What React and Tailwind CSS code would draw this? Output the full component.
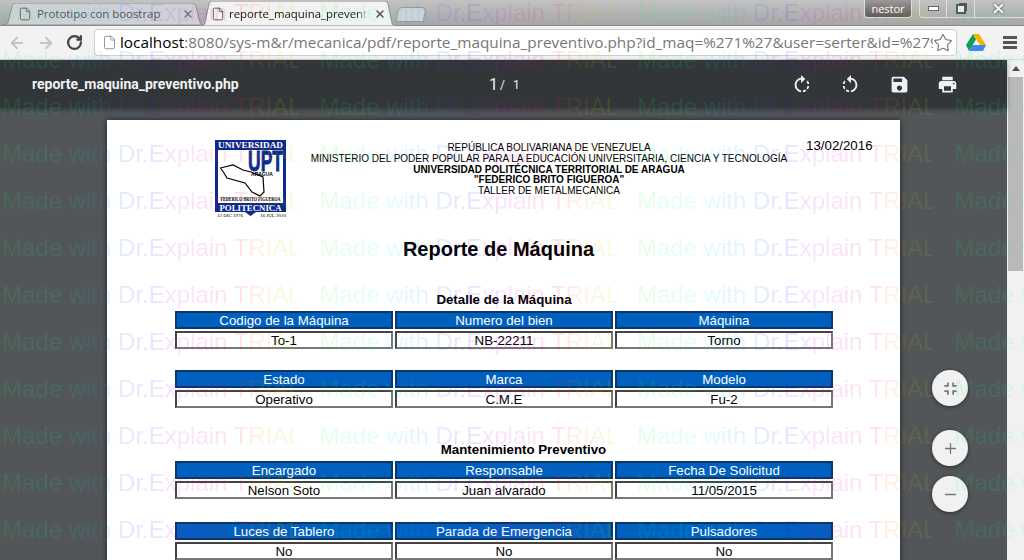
import { ArrowLeft, ArrowRight, File, Minus, Plus, RotateCw, Star, X } from "lucide-react";

function Watermark() {
  const rows = [13, 60, 107, 154, 201, 248, 295, 342, 389, 436, 483, 530];
  return (
    <div className="absolute left-[2px] top-[-11px] z-20 flex flex-col pointer-events-none">
      {rows.map((y) => (
        <div key={y} className="h-[47px] flex items-center gap-[21.5px]">
          {[0, 1, 2, 3].map((i) => (
            <span
              key={i}
              className="w-[296px] shrink-0 whitespace-nowrap text-[24px] leading-[28px] text-transparent bg-clip-text opacity-[0.11] bg-[linear-gradient(90deg,#00ff40_0%,#00ffe0_22%,#0080ff_38%,#4000ff_50%,#e000ff_60%,#ff0040_80%,#ff8000_86%,#a0ff00_100%)]"
            >
              Made with Dr.Explain TRIAL
            </span>
          ))}
        </div>
      ))}
    </div>
  );
}

function Logo() {
  return (
    <svg width="72" height="78" viewBox="0 0 72 78" className="shrink-0">
      <path d="M0 0H71V72H41L35.5 76L30 72H0Z" fill="#0b2a8c" />
      <path d="M3 10H68V63H3Z" fill="#fff" />
      <text x="35.5" y="8" textAnchor="middle" fontSize="8" fontWeight="700" fontFamily="Liberation Serif" fill="#fff" textLength="65" lengthAdjust="spacingAndGlyphs">UNIVERSIDAD</text>
      <text x="33" y="31" fontSize="29" fontWeight="700" fontFamily="Liberation Sans" fill="#0b2a8c" stroke="#0b2a8c" strokeWidth="0.8" textLength="35" lengthAdjust="spacingAndGlyphs">UPT</text>
      <path d="M5.5 28L18 25L28 30L36 32L48 37L49 52L45 56L37 52L30 43L12 38L9 33Z" fill="#fff" stroke="#000" strokeWidth="1.2" />
      <text x="47" y="36" textAnchor="middle" fontSize="5" fontWeight="700" fontFamily="Liberation Sans" fill="#000">ARAGUA</text>
      <text x="35.5" y="61" textAnchor="middle" fontSize="5.5" fontWeight="700" fontFamily="Liberation Serif" fill="#000" textLength="60" lengthAdjust="spacingAndGlyphs">FEDERICO BRITO FIGUEROA</text>
      <text x="35.5" y="71" textAnchor="middle" fontSize="8" fontWeight="700" fontFamily="Liberation Serif" fill="#fff" textLength="62" lengthAdjust="spacingAndGlyphs">POLITECNICA</text>
      <text x="2" y="77" fontSize="5" fontFamily="Liberation Serif" fill="#000">12 DIC 1976</text>
      <text x="71" y="77" textAnchor="end" fontSize="5" fontFamily="Liberation Serif" fill="#000">16 JUL 2010</text>
    </svg>
  );
}

function Block({ head, body, className }) {
  return (
    <div className={`flex flex-col gap-[2px] ${className}`}>
      <div className="flex gap-[2px]">
        {head.map((c) => (
          <div key={c} className="w-[218px] h-[18px] border-2 border-[#0d3768] bg-[#0060c0] text-white text-center text-[13.3px] leading-[15px]">
            {c}
          </div>
        ))}
      </div>
      <div className="flex gap-[2px]">
        {body.map((c, i) => (
          <div key={i} className="w-[218px] h-[18px] border-2 border-[#777] border-t-[#444] border-l-[#444] bg-white text-black text-center text-[13.3px] leading-[15px]">
            {c}
          </div>
        ))}
      </div>
    </div>
  );
}

function Round({ children, className }) {
  return (
    <div className={`absolute left-[932px] w-[36px] h-[36px] rounded-full bg-[#f1f1f1] shadow-[0_1px_4px_rgba(0,0,0,0.45)] flex items-center justify-center text-[#777] ${className}`}>
      {children}
    </div>
  );
}

function MaterialIcon({ d, size }) {
  return (
    <svg width={size} height={size} viewBox="0 0 24 24" fill="currentColor" className="shrink-0">
      <path d={d} />
    </svg>
  );
}

function Tab({ fill, stroke, className, children }) {
  return (
    <div className={`relative flex items-center ${className}`}>
      <svg className="absolute inset-0 w-full h-full" viewBox="0 0 100 24" preserveAspectRatio="none">
        <path d="M0 24C3 24 3 22 3.2 19L5 3C5.2 1 6 0 7 0H93C94 0 94.8 1 95 3L96.8 19C97 22 97 24 100 24Z" fill={fill} stroke={stroke} strokeWidth="1" vectorEffect="non-scaling-stroke" />
      </svg>
      {children}
    </div>
  );
}

const ROTATE_R = "M15.55 5.55L11 1v3.07C7.06 4.56 4 7.92 4 12s3.05 7.44 7 7.93v-2.02c-2.84-.48-5-2.94-5-5.91s2.16-5.43 5-5.91V10l4.55-4.45zM19.93 11c-.17-1.39-.72-2.73-1.62-3.89l-1.42 1.42c.54.75.88 1.6 1.02 2.47h2.02zM13 17.9v2.02c1.39-.17 2.74-.71 3.9-1.61l-1.44-1.44c-.75.54-1.59.89-2.46 1.03zm3.89-2.42l1.42 1.41c.9-1.16 1.45-2.5 1.62-3.89h-2.02c-.14.87-.48 1.72-1.02 2.48z";
const ROTATE_L = "M7.11 8.53L5.7 7.11C4.8 8.27 4.24 9.61 4.07 11h2.02c.14-.87.49-1.72 1.02-2.47zM6.09 13H4.07c.17 1.39.72 2.73 1.62 3.89l1.41-1.42c-.52-.75-.87-1.59-1.01-2.47zm1.01 5.32c1.16.9 2.51 1.44 3.9 1.61V17.9c-.87-.15-1.71-.49-2.46-1.03L7.1 18.32zM13 4.07V1L8.45 5.55 13 10V6.09c2.84.48 5 2.94 5 5.91s-2.16 5.43-5 5.91v2.02c3.95-.49 7-3.85 7-7.93s-3.05-7.44-7-7.93z";
const SAVE = "M17 3H5c-1.11 0-2 .9-2 2v14c0 1.1.89 2 2 2h14c1.1 0 2-.9 2-2V7l-4-4zm-5 16c-1.66 0-3-1.34-3-3s1.34-3 3-3 3 1.34 3 3-1.34 3-3 3zm3-10H5V5h10v4z";
const PRINT = "M19 8H5c-1.66 0-3 1.34-3 3v6h4v4h12v-4h4v-6c0-1.66-1.34-3-3-3zm-3 11H8v-5h8v5zm3-7c-.55 0-1-.45-1-1s.45-1 1-1 1 .45 1 1-.45 1-1 1zm-1-9H6v4h12V3z";
const FIT = "M5 16h3v3h2v-5H5v2zm3-8H5v2h5V5H8v3zm6 11h2v-3h3v-2h-5v5zm2-11V5h-2v5h5V8h-3z";

export default function App() {
  return (
    <div className="relative w-[1024px] h-[560px] overflow-hidden flex flex-col font-['Liberation_Sans',sans-serif]">
      <Watermark />

      {/* tab strip */}
      <div className="relative h-[26px] shrink-0 flex items-end pl-[2px] bg-[linear-gradient(180deg,#c2c2c2,#a6a6a6)] border-b border-[#8a8a8a]">
        <Tab fill="#ced2d6" stroke="#8c8c8c" className="w-[204px] h-[22px]">
          <File size={14} strokeWidth={1.4} className="relative ml-[16px] text-[#555]" />
          <span className="relative ml-[5px] w-[140px] whitespace-nowrap text-[11.4px] text-[#555] font-['Open_Sans',sans-serif]">Prototipo con boostrap</span>
          <X size={12} strokeWidth={3} className="relative ml-[5px] text-[#777]" />
        </Tab>
        <Tab fill="#f2f2f2" stroke="#8c8c8c" className="w-[199px] h-[25px] -ml-[7px] -mb-[1px] z-10">
          <File size={14} strokeWidth={1.4} className="relative ml-[12px] text-[#444]" />
          <span className="relative ml-[4px] w-[139px] overflow-hidden whitespace-nowrap text-[11.4px] text-[#111] font-['Open_Sans',sans-serif] [mask-image:linear-gradient(90deg,#000_92%,transparent)]">reporte_maquina_preventivo.php</span>
          <X size={12} strokeWidth={3} className="relative ml-[6px] text-[#555]" />
        </Tab>
        <div className="w-[28px] h-[15px] ml-[-1px] mb-[3px] -skew-x-12 rounded-t-sm bg-[#cfd3d8] border border-[#999]" />
        <div className="flex-1" />
        <div className="self-start flex">
          <div className="w-[48px] h-[18px] rounded-b border border-t-0 border-[#ddd] bg-[linear-gradient(180deg,#9a9a9a,#5c5c5c)] text-white text-[11px] leading-[17px] text-center mr-[7px] font-['Open_Sans',sans-serif]">nestor</div>
          <div className="w-[105px] h-[18px] rounded-bl border-l border-b border-[#ddd] flex items-center text-[#444]">
            <div className="w-[27px] h-full flex justify-center items-center border-r border-[#ddd]"><div className="w-[11px] h-[5px] bg-white border border-[#666]" /></div>
            <div className="w-[28px] h-full flex justify-center items-center border-r border-[#ddd]">
              <div className="relative w-[10px] h-[10px] border-2 border-[#555] bg-[#eee] shadow-[2px_-2px_0_-1px_#555]" />
            </div>
            <div className="flex-1 flex justify-center pr-[2px]"><X size={15} strokeWidth={3.5} className="text-[#f8f8f8] drop-shadow-[0_0_1px_#333]" /></div>
          </div>
        </div>
      </div>

      {/* address bar */}
      <div className="h-[34px] shrink-0 flex items-center bg-[#f2f2f2] border-b border-[#d8d8d8]">
        <ArrowLeft size={18} className="ml-[8px] text-[#c4c4c4]" strokeWidth={2.5} />
        <ArrowRight size={18} className="ml-[11px] text-[#c4c4c4]" strokeWidth={2.5} />
        <RotateCw size={17} className="ml-[11px] text-[#444]" strokeWidth={3.2} />
        <div className="ml-[11px] w-[863px] h-[27px] rounded-sm bg-white border border-[#cfcfcf] flex items-center pl-[7px] pr-[3px]">
          <File size={15} className="text-[#888] shrink-0" strokeWidth={1.4} />
          <div className="ml-[3px] flex-1 overflow-hidden whitespace-nowrap text-[15.35px] text-[#777] font-['Open_Sans',sans-serif]">
            <span className="text-black">localhost</span>:8080/sys-m&amp;r/mecanica/pdf/reporte_maquina_preventivo.php?id_maq=%271%27&amp;user=serter&amp;id=%279
          </div>
          <Star size={20} className="text-[#777] shrink-0" strokeWidth={1.4} />
        </div>
        <svg width="20" height="17" viewBox="0 0 20 17" className="ml-[9px]">
          <path d="M7 0H13L20 11H14Z" fill="#f4b400" />
          <path d="M7 0L0 11L3 17L10 5.5Z" fill="#0f9d58" />
          <path d="M3 17H17L20 11H6.5Z" fill="#4285f4" />
        </svg>
        <div className="ml-[17px] flex flex-col gap-[2px]">
          <div className="w-[14px] h-[3px] bg-[#555]" />
          <div className="w-[14px] h-[3px] bg-[#555]" />
          <div className="w-[14px] h-[3px] bg-[#555]" />
        </div>
      </div>

      <div className="flex-1 flex min-h-0">
        <div className="flex-1 flex flex-col min-w-0">
          {/* pdf toolbar */}
          <div className="relative z-10 h-[48px] shrink-0 flex items-center pt-[1px] bg-[#323639] text-[#f1f1f1] shadow-[0_2px_5px_rgba(0,0,0,0.35)] font-['Roboto',sans-serif]">
            <span className="ml-[32px] w-[457px] text-[14px] font-bold">reporte_maquina_preventivo.php</span>
            <span className="w-[11px] text-[16px]">1</span>
            <span className="w-[13px] text-[12px]">/</span>
            <span className="w-[8px] text-[12px]">1</span>
            <div className="ml-[270px] w-[22px]"><MaterialIcon d={ROTATE_R} size={22} /></div>
            <div className="ml-[26px] w-[22px]"><MaterialIcon d={ROTATE_L} size={22} /></div>
            <div className="ml-[28px] w-[22px]"><MaterialIcon d={SAVE} size={21} /></div>
            <div className="ml-[26px] w-[20px]"><MaterialIcon d={PRINT} size={21} /></div>
          </div>

          {/* viewer */}
          <div className="flex-1 flex justify-center pt-[12px] bg-[#525659] overflow-hidden min-h-0">
            <div className="w-[793px] h-[600px] shrink-0 bg-white shadow-[0_0_6px_rgba(0,0,0,0.6)] pt-[20px]">
              <div className="flex h-[80px] pl-[108px]">
                <Logo />
                <div className="ml-[12px] w-[500px] shrink-0 pt-[3px] text-center text-[10px] leading-[10.75px] text-black">
                  <p>REPÚBLICA BOLIVARIANA DE VENEZUELA</p>
                  <p>MINISTERIO DEL PODER POPULAR PARA LA EDUCACIÓN UNIVERSITARIA, CIENCIA Y TECNOLOGÍA</p>
                  <p className="font-bold">UNIVERSIDAD POLITÉCNICA TERRITORIAL DE ARAGUA</p>
                  <p className="font-bold">"FEDERICO BRITO FIGUEROA"</p>
                  <p>TALLER DE METALMECANICA</p>
                </div>
                <span className="ml-[7px] text-[13.3px] leading-[14px] -mt-[1px] text-black whitespace-nowrap">13/02/2016</span>
              </div>
              <h1 className="mt-[17px] pl-[68px] w-[715px] text-center text-[20px] leading-[24px] font-bold text-black">Reporte de Máquina</h1>
              <div className="pl-[68px]">
                <h2 className="mt-[32px] w-[658px] text-center text-[13.3px] leading-[14px] font-bold text-black">Detalle de la Máquina</h2>
                <Block className="mt-[4px]" head={["Codigo de la Máquina", "Numero del bien", "Máquina"]} body={["To-1", "NB-22211", "Torno"]} />
                <Block className="mt-[21px]" head={["Estado", "Marca", "Modelo"]} body={["Operativo", "C.M.E", "Fu-2"]} />
                <h2 className="mt-[35px] w-[697px] text-center text-[13.3px] leading-[14px] font-bold text-black">Mantenimiento Preventivo</h2>
                <Block className="mt-[4px]" head={["Encargado", "Responsable", "Fecha De Solicitud"]} body={["Nelson Soto", "Juan alvarado", "11/05/2015"]} />
                <Block className="mt-[23px]" head={["Luces de Tablero", "Parada de Emergencia", "Pulsadores"]} body={["No", "No", "No"]} />
              </div>
            </div>
          </div>
        </div>

        {/* scrollbar */}
        <div className="w-[17px] shrink-0 bg-[#f1f1f1] flex flex-col items-center pt-[6px]">
          <div className="w-0 h-0 border-x-[4px] border-x-transparent border-b-[5px] border-b-[#505050]" />
          <div className="mt-[6px] w-[15px] h-[194px] bg-[#b9b9b9]" />
        </div>
      </div>

      <Round className="top-[370px]"><MaterialIcon d={FIT} size={21} /></Round>
      <Round className="top-[430px]"><Plus size={17} strokeWidth={1.8} /></Round>
      <Round className="top-[476px]"><Minus size={17} strokeWidth={2} /></Round>
    </div>
  );
}
